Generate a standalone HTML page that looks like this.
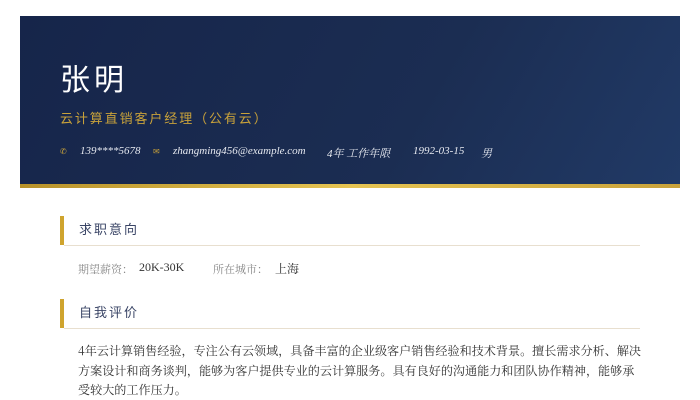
<!DOCTYPE html>
<html><head><meta charset="utf-8"><style>
*{margin:0;padding:0;box-sizing:border-box}
body{width:700px;height:400px;background:#fff;font-family:"Liberation Serif","Noto Serif CJK SC",serif;overflow:hidden;position:relative}
.hd{position:absolute;left:20px;top:16px;width:660px;height:168px;background:linear-gradient(120deg,#16254a 0%,#1b2d52 60%,#213a66 100%)}
.gb{position:absolute;left:20px;top:184px;width:660px;height:4px;background:linear-gradient(90deg,#b8922a,#e6c452,#c9a23a)}
.name{position:absolute;left:40px;top:39px;font-family:"Liberation Sans","Noto Sans CJK SC",sans-serif;font-size:30px;color:#fff;letter-spacing:4px}
.sub{position:absolute;left:40px;top:92px;font-size:13px;color:#c9a23a;letter-spacing:1.9px;font-family:"Liberation Serif","Noto Sans CJK SC",sans-serif}
.ct{position:absolute;top:129px;font-size:11px;color:#e6e9f0;font-style:italic;white-space:nowrap}
.ic{position:absolute;top:131px;font-size:8px;color:#c9a23a}
.bar{position:absolute;left:60px;width:4px;background:#cfa42e}
.st{position:absolute;left:79px;font-size:13px;color:#3a4566;letter-spacing:2px;font-family:"Liberation Sans","Noto Sans CJK SC",sans-serif}
.ln{position:absolute;left:64px;width:576px;height:1px;background:#e8dfcf}
.lb{position:absolute;top:261px;font-size:11px;color:#888}
.vl{position:absolute;top:260px;font-size:12px;color:#333}
.p{position:absolute;left:78px;top:341px;white-space:nowrap;font-family:"Noto Serif CJK SC","Liberation Serif",serif;font-size:12.1px;line-height:19.5px;color:#333}
</style></head><body>
<div class="hd">
<div class="name">张明</div>
<div class="sub">云计算直销客户经理（公有云）</div>
<div class="ic" style="left:40px">✆</div>
<div class="ct" style="left:60px">139****5678</div>
<div class="ic" style="left:133px">✉</div>
<div class="ct" style="left:153px">zhangming456@example.com</div>
<div class="ct" style="left:307px">4年 工作年限</div>
<div class="ct" style="left:393px">1992-03-15</div>
<div class="ct" style="left:461px">男</div>
</div>
<div class="gb"></div>
<div class="bar" style="top:216px;height:29px"></div>
<div class="st" style="top:219px">求职意向</div>
<div class="ln" style="top:245px"></div>
<div class="lb" style="left:78px">期望薪资：</div>
<div class="vl" style="left:139px">20K-30K</div>
<div class="lb" style="left:213px">所在城市：</div>
<div class="vl" style="left:275px">上海</div>
<div class="bar" style="top:299px;height:29px"></div>
<div class="st" style="top:302px">自我评价</div>
<div class="ln" style="top:328px"></div>
<div class="p">4年云计算销售经验，专注公有云领域，具备丰富的企业级客户销售经验和技术背景。擅长需求分析、解决<br>方案设计和商务谈判，能够为客户提供专业的云计算服务。具有良好的沟通能力和团队协作精神，能够承<br>受较大的工作压力。</div>
</body></html>
